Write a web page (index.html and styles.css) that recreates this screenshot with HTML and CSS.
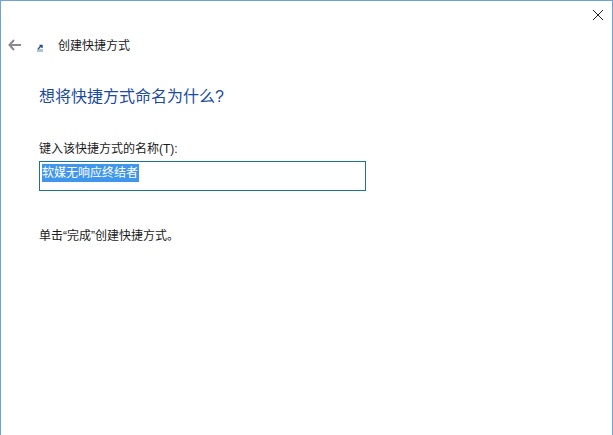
FILE: index.html
```html
<!DOCTYPE html>
<html lang="zh-CN">
	<head>
		<title>创建快捷方式</title>
		<meta charset="UTF-8" />
		<link rel="stylesheet" href="styles.css">
	</head>
	<body>
		<div class="window">
			<div class="close-row">
				<svg class="close-icon" width="12" height="12" viewBox="0 0 12 12">
					<path d="M1 1L11 11M11 1L1 11" stroke="#222" stroke-width="1" fill="none"/>
				</svg>
			</div>
			<!-- Wizard header -->
			<div class="nav-row">
				<svg class="back-icon" width="13" height="12" viewBox="0 0 13 12">
					<path d="M6 1L1.5 6L6 11M1.5 6H13" stroke="#8a8a8a" stroke-width="2" fill="none"/>
				</svg>
				<svg class="app-icon" width="6" height="8" viewBox="0 0 6 8">
					<rect x="0" y="5" width="6" height="3" fill="#a9c3dc"/>
					<path d="M1 5L4 2M2.5 1.5H5V4" stroke="#2a4f86" stroke-width="1.4" fill="none"/>
				</svg>
				<span class="nav-title">创建快捷方式</span>
			</div>
			<!-- Wizard body -->
			<div class="content">
				<h2 class="heading">想将快捷方式命名为什么?</h2>
				<div class="field-label">键入该快捷方式的名称(T):</div>
				<div class="name-input"><span class="selected-text">软媒无响应终结者</span></div>
				<p class="hint">单击“完成”创建快捷方式。</p>
			</div>
		</div>
	</body>
</html>
```

FILE: styles.css
```css
html, body {
	margin: 0;
	height: 100%;
}

body {
	font-family: "Liberation Sans", "Noto Sans CJK SC", sans-serif;
	font-size: 12px;
	color: #1a1a1a;
	background-color: #fff;
}

.window {
	box-sizing: border-box;
	height: 435px;
	border-top: 1px solid #6ea3d6;
	border-left: 1px solid #6ea3d6;
	border-right: 1px solid #6ea3d6;
}

.close-row {
	display: flex;
	justify-content: flex-end;
	padding: 8px 8px 0 0;
	height: 12px;
}

.nav-row {
	display: flex;
	align-items: center;
	height: 18px;
	margin-top: 16px;
	padding-left: 7px;
}

.back-icon {
	margin-top: -2px;
	margin-right: 16px;
}

.app-icon {
	margin-top: 4px;
	margin-right: 15px;
}

.nav-title {
	line-height: 18px;
}

.content {
	padding-left: 38px;
}

.heading {
	margin: 30px 0 0;
	font-size: 16px;
	font-weight: normal;
	line-height: 24px;
	color: #1c4aa0;
}

.field-label {
	margin-top: 31px;
	line-height: 18px;
}

.name-input {
	box-sizing: border-box;
	width: 327px;
	height: 30px;
	margin-top: 3px;
	padding: 2px 0 0 2px;
	border: 1px solid #1c7398;
}

.selected-text {
	display: inline-block;
	height: 18px;
	padding-right: 1px;
	line-height: 18px;
	background-color: #3f96ea;
	color: #fff;
}

.hint {
	margin: 36px 0 0;
	line-height: 18px;
}
```
